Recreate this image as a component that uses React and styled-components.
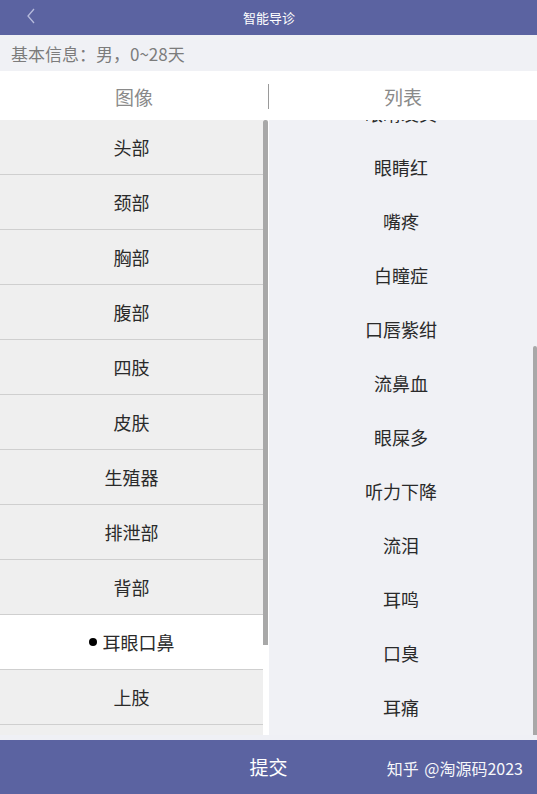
import React, { useLayoutEffect, useRef, useState } from 'react';
import styled, { createGlobalStyle } from 'styled-components';

const GlobalStyle = createGlobalStyle`
	html, body {
		margin: 0;
		padding: 0;
		background: #eff0f5;
	}
	* {
		box-sizing: border-box;
	}
`;

const parts = [
	'头部',
	'颈部',
	'胸部',
	'腹部',
	'四肢',
	'皮肤',
	'生殖器',
	'排泄部',
	'背部',
	'耳眼口鼻',
	'上肢',
	'下肢',
	'全身',
];

const symptoms = [
	'耳朵流脓',
	'鼻塞',
	'流鼻涕',
	'打喷嚏',
	'眼睑红肿',
	'斜视',
	'眼睛发黄',
	'眼睛红',
	'嘴疼',
	'白瞳症',
	'口唇紫绀',
	'流鼻血',
	'眼屎多',
	'听力下降',
	'流泪',
	'耳鸣',
	'口臭',
	'耳痛',
];

// thumb size and place, taken from the scroll box
const measure = (el) => {
	if (!el) return { top: 0, height: 0 };
	const { scrollTop, scrollHeight, clientHeight } = el;
	return {
		top: (scrollTop * clientHeight) / scrollHeight,
		height: (clientHeight * clientHeight) / scrollHeight,
	};
};

const App = () => {
	const partRef = useRef(null);
	const listRef = useRef(null);
	const [partThumb, setPartThumb] = useState({ top: 0, height: 0 });
	const [listThumb, setListThumb] = useState({ top: 0, height: 0 });

	useLayoutEffect(() => {
		// right list is scrolled all the way down
		if (listRef.current) {
			listRef.current.scrollTop = listRef.current.scrollHeight;
		}
		setPartThumb(measure(partRef.current));
		setListThumb(measure(listRef.current));
	}, []);

	return (
		<Page>
			<GlobalStyle />

			<Header>
				<BackButton>
					<svg width="10" height="16" viewBox="0 0 10 16">
						<polyline
							points="8,1 2,8 8,15"
							fill="none"
							stroke="#b7bbdc"
							strokeWidth="1.3"
						/>
					</svg>
				</BackButton>
				<Title>智能导诊</Title>
			</Header>

			<InfoBar>基本信息：男，0~28天</InfoBar>

			<Tabs>
				<Tab>图像</Tab>
				<Divider />
				<Tab>列表</Tab>
			</Tabs>

			<Main>
				<Panel width={269} bg="#ffffff">
					<Scroller ref={partRef}>
						{parts.map((name) => (
							<PartRow key={name} active={name === '耳眼口鼻'}>
								{name === '耳眼口鼻' && <Dot />}
								{name}
							</PartRow>
						))}
					</Scroller>
					<Track size={6}>
						<Thumb
							size={5}
							style={{ top: partThumb.top, height: partThumb.height - 4 }}
						/>
					</Track>
				</Panel>

				<Panel bg="#f0f1f5">
					<Scroller ref={listRef}>
						{symptoms.map((name) => (
							<SymptomItem key={name}>{name}</SymptomItem>
						))}
					</Scroller>
					<Track size={4}>
						<Thumb
							size={4}
							style={{ top: listThumb.top, height: listThumb.height }}
						/>
					</Track>
				</Panel>
			</Main>

			<Footer>
				<SubmitButton>提交</SubmitButton>
				<Watermark>知乎 @淘源码2023</Watermark>
			</Footer>
		</Page>
	);
};

export default App;

const Page = styled.div`
	width: 537px;
	height: 794px;
	display: flex;
	flex-direction: column;
	font-family: 'Noto Sans CJK SC', 'Noto Sans', sans-serif;
	background: #eff0f5;
	overflow: hidden;
`;

const Header = styled.div`
	height: 35px;
	flex-shrink: 0;
	background: #5b63a1;
	display: flex;
	align-items: center;
	justify-content: center;
	position: relative;
`;

const BackButton = styled.div`
	position: absolute;
	left: 26px;
	top: 8px;
	display: flex;
`;

const Title = styled.div`
	color: #ffffff;
	font-size: 13px;
	margin-left: 1px;
`;

const InfoBar = styled.div`
	height: 36px;
	flex-shrink: 0;
	background: #f0f1f5;
	color: #7c7c7c;
	font-size: 17px;
	display: flex;
	align-items: center;
	padding-left: 11px;
`;

const Tabs = styled.div`
	height: 49px;
	flex-shrink: 0;
	background: #ffffff;
	display: flex;
	align-items: center;
`;

const Tab = styled.div`
	flex: 1;
	text-align: center;
	color: #8a8a8a;
	font-size: 19px;
	padding-top: 1px;
`;

const Divider = styled.div`
	width: 1px;
	height: 25px;
	background: #9a9a9a;
	margin-top: 2px;
`;

const Main = styled.div`
	height: 615px;
	flex-shrink: 0;
	display: flex;
`;

const Panel = styled.div`
	${(p) => (p.width ? `width: ${p.width}px; flex-shrink: 0;` : 'flex: 1;')}
	height: 100%;
	display: flex;
	background: ${(p) => p.bg};
`;

const Scroller = styled.div`
	flex: 1;
	height: 100%;
	overflow-y: scroll;
	scrollbar-width: none;

	&::-webkit-scrollbar {
		display: none;
	}
`;

const Track = styled.div`
	width: ${(p) => p.size}px;
	height: 100%;
	flex-shrink: 0;
	position: relative;
`;

const Thumb = styled.div`
	position: absolute;
	left: 0;
	width: ${(p) => p.size}px;
	background: #a8a8a8;
	border-radius: 2px 2px 0 0;
`;

const PartRow = styled.div`
	height: 55px;
	border-bottom: 1px solid #cfcfcf;
	background: ${(p) => (p.active ? '#ffffff' : '#efefef')};
	color: #2a2a2a;
	font-size: 18px;
	display: flex;
	align-items: center;
	justify-content: center;
	padding-bottom: 1px;
`;

const Dot = styled.span`
	width: 8px;
	height: 8px;
	border-radius: 50%;
	background: #000000;
	margin-right: 6px;
`;

const SymptomItem = styled.div`
	height: 54px;
	display: flex;
	align-items: center;
	justify-content: center;
	color: #2a2a2a;
	font-size: 18px;
	padding-bottom: 3px;
`;

const Footer = styled.div`
	margin-top: auto;
	height: 54px;
	flex-shrink: 0;
	background: #5b63a1;
	display: flex;
	align-items: center;
	justify-content: center;
	position: relative;
`;

const SubmitButton = styled.div`
	color: #ffffff;
	font-size: 19px;
	margin-top: -2px;
`;

const Watermark = styled.div`
	position: absolute;
	right: 14px;
	top: 16px;
	color: #ffffff;
	font-size: 16px;
	word-spacing: 2px;
	opacity: 0.95;
`;
